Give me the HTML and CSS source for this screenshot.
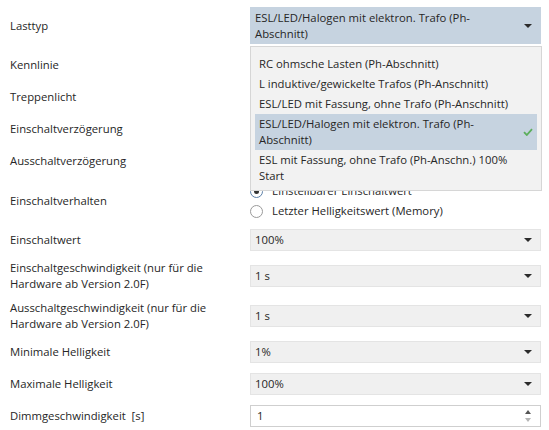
FILE: index.html
```html
<!DOCTYPE html>
<html lang="de">
<head>
<meta charset="utf-8">
<link rel="stylesheet" href="styles.css">
</head>
<body>
<div class="form">
  <div class="row row-first">
    <div class="label">Lasttyp</div>
    <div class="ctl ctl-top">
      <div class="select select-open">
        <span class="val">ESL/LED/Halogen mit elektron. Trafo (Ph-<br>Abschnitt)</span>
        <span class="caret"></span>
      </div>
      <ul class="menu">
        <li class="item">RC ohmsche Lasten (Ph-Abschnitt)</li>
        <li class="item">L induktive/gewickelte Trafos (Ph-Anschnitt)</li>
        <li class="item">ESL/LED mit Fassung, ohne Trafo (Ph-Anschnitt)</li>
        <li class="item item-sel">ESL/LED/Halogen mit elektron. Trafo (Ph-<br>Abschnitt)
          <svg class="check" width="10" height="8" viewBox="0 0 10 8"><path d="M1 4.2 L3.8 7 L9 1.2" fill="none" stroke="#5cae5c" stroke-width="1.8"/></svg>
        </li>
        <li class="item">ESL mit Fassung, ohne Trafo (Ph-Anschn.) 100%<br>Start</li>
      </ul>
    </div>
  </div>
  <div class="row">
    <div class="label">Kennlinie</div>
    <div class="ctl"><div class="select"><span class="val"></span><span class="caret"></span></div></div>
  </div>
  <div class="row">
    <div class="label">Treppenlicht</div>
    <div class="ctl"><div class="select"><span class="val"></span><span class="caret"></span></div></div>
  </div>
  <div class="row">
    <div class="label">Einschaltverzögerung</div>
    <div class="ctl"><div class="select"><span class="val"></span><span class="caret"></span></div></div>
  </div>
  <div class="row">
    <div class="label">Ausschaltverzögerung</div>
    <div class="ctl"><div class="select"><span class="val"></span><span class="caret"></span></div></div>
  </div>
  <div class="row row-radio">
    <div class="label">Einschaltverhalten</div>
    <div class="ctl radios">
      <div class="radio"><span class="dot dot-on"></span><span>Einstellbarer Einschaltwert</span></div>
      <div class="radio"><span class="dot"></span><span>Letzter Helligkeitswert (Memory)</span></div>
    </div>
  </div>
  <div class="row">
    <div class="label">Einschaltwert</div>
    <div class="ctl"><div class="select"><span class="val">100%</span><span class="caret"></span></div></div>
  </div>
  <div class="row row-two">
    <div class="label">Einschaltgeschwindigkeit (nur für die Hardware ab Version 2.0F)</div>
    <div class="ctl"><div class="select"><span class="val">1 s</span><span class="caret"></span></div></div>
  </div>
  <div class="row row-two">
    <div class="label">Ausschaltgeschwindigkeit (nur für die Hardware ab Version 2.0F)</div>
    <div class="ctl"><div class="select"><span class="val">1 s</span><span class="caret"></span></div></div>
  </div>
  <div class="row">
    <div class="label">Minimale Helligkeit</div>
    <div class="ctl"><div class="select"><span class="val">1%</span><span class="caret"></span></div></div>
  </div>
  <div class="row">
    <div class="label">Maximale Helligkeit</div>
    <div class="ctl"><div class="select"><span class="val">100%</span><span class="caret"></span></div></div>
  </div>
  <div class="row">
    <div class="label">Dimmgeschwindigkeit&nbsp; [s]</div>
    <div class="ctl">
      <div class="number">
        <span class="val">1</span>
        <span class="spin"><span class="up"></span><span class="down"></span></span>
      </div>
    </div>
  </div>
</div>
</body>
</html>
```

FILE: styles.css
```css
* { box-sizing: border-box; }
html, body { margin: 0; padding: 0; background: #ffffff; }
body {
  font-family: "Open Sans", "Noto Sans", "Liberation Sans", sans-serif;
  font-size: 11.3px;
  line-height: 16px;
  color: #262626;
  width: 549px;
  height: 430px;
  overflow: hidden;
}
.form {
  display: flex;
  flex-direction: column;
  padding: 2px 8px 0 10px;
}
.row {
  display: grid;
  grid-template-columns: 240px 1fr;
  align-items: center;
  padding: 5px 0;
}
.row-first { padding: 5px 0 5px; }
.row-radio { padding: 4px 0 3px; }
.row-two { padding: 4px 0; }
.label { padding-right: 10px; }
.ctl { position: relative; }
.ctl-top { z-index: 10; }

.select {
  height: 22px;
  background: #f0f0f0;
  border: 1px solid #e4e4e4;
  padding: 0 8px 0 4px;
  display: flex;
  align-items: center;
  justify-content: space-between;
}
.select-open {
  height: 37px;
  background: #c6d3e0;
  border-color: #c6d3e0;
  padding: 2px 8px 2px 4px;
}
.caret {
  width: 0; height: 0;
  border-left: 4px solid transparent;
  border-right: 4px solid transparent;
  border-top: 4px solid #2b2b2b;
  flex: none;
}

.menu {
  position: absolute;
  left: 0;
  right: -1px;
  top: 39px;
  margin: 0;
  list-style: none;
  background: #f2f2f2;
  border: 1px solid #d6d6d6;
  padding: 7px 4px 4px;
}
.item {
  position: relative;
  padding: 2px 4px;
}
.item-sel { background: #c6d3e0; }
.check { position: absolute; right: 4px; top: 14px; }

.radios { display: flex; flex-direction: column; }
.radio {
  height: 20px;
  display: flex;
  align-items: center;
  gap: 9px;
}
.dot {
  width: 13px; height: 13px;
  border-radius: 50%;
  border: 1px solid #9a9a9a;
  background: #fff;
  flex: none;
  display: flex;
  align-items: center;
  justify-content: center;
}
.dot-on { border-color: #5b7fa8; }
.dot-on::after {
  content: "";
  width: 5px; height: 5px; border-radius: 50%;
  background: #333;
}

.number {
  height: 22px;
  border: 1px solid #cfcfcf;
  background: #fff;
  display: flex;
  align-items: center;
  justify-content: space-between;
  padding: 0 9px 0 6px;
}
.spin { display: flex; flex-direction: column; gap: 4px; }
.up, .down {
  width: 0; height: 0;
  border-left: 3px solid transparent;
  border-right: 3px solid transparent;
}
.up { border-bottom: 4px solid #555; }
.down { border-top: 4px solid #b5b5b5; }
```
